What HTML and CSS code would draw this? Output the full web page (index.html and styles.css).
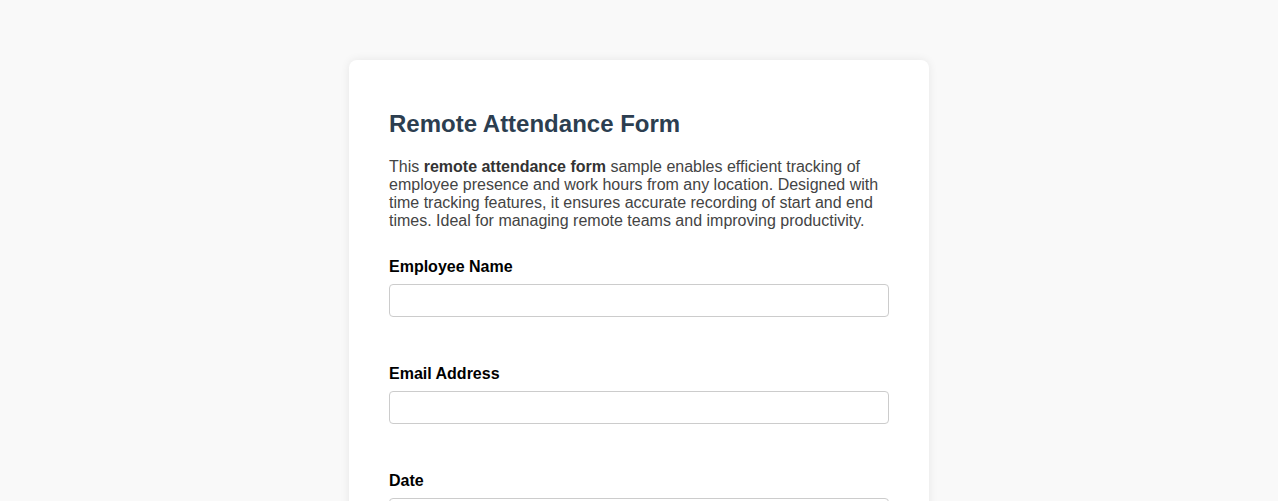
FILE: index.html
```html
<!DOCTYPE html>
<html lang="en">
<head>
<meta charset="utf-8">
<title>Remote Attendance Form</title>
<link rel="stylesheet" href="styles.css">
</head>
<body>
<div class="card">
  <h2 class="title">Remote Attendance Form</h2>
  <p class="intro">This <strong>remote attendance form</strong> sample enables efficient tracking of employee presence and work hours from any location. Designed with time tracking features, it ensures accurate recording of start and end times. Ideal for managing remote teams and improving productivity.</p>
  <form class="form">
    <div class="field">
      <label class="label" for="name">Employee Name</label>
      <input class="input" id="name" type="text">
    </div>
    <div class="field">
      <label class="label" for="email">Email Address</label>
      <input class="input" id="email" type="email">
    </div>
    <div class="field">
      <label class="label" for="date">Date</label>
      <input class="input" id="date" type="text">
    </div>
  </form>
</div>
</body>
</html>
```
FILE: styles.css
```css
html, body {
  margin: 0;
  padding: 0;
}
body {
  background: #f9f9f9;
  font-family: "Liberation Sans", Arial, sans-serif;
  padding-top: 60px;
}
.card {
  width: 580px;
  box-sizing: border-box;
  margin: 0 auto;
  background: #fff;
  border-radius: 8px;
  box-shadow: 0 0 10px rgba(0, 0, 0, 0.08);
  padding: 30px 40px 40px;
}
.title {
  margin: 20px 0 20px;
  font-size: 24px;
  font-weight: bold;
  color: #2c3e50;
}
.intro {
  margin: 0 0 28px;
  font-size: 16px;
  color: #444;
}
.intro strong {
  color: #333;
}
.field {
  margin-bottom: 48px;
}
.label {
  display: block;
  font-size: 16px;
  font-weight: bold;
  color: #000;
  margin-bottom: 8px;
}
.input {
  display: block;
  width: 500px;
  height: 33px;
  box-sizing: border-box;
  border: 1px solid #ccc;
  border-radius: 4px;
  padding: 8px;
  font-family: inherit;
  font-size: 16px;
  background: #fff;
}
```
